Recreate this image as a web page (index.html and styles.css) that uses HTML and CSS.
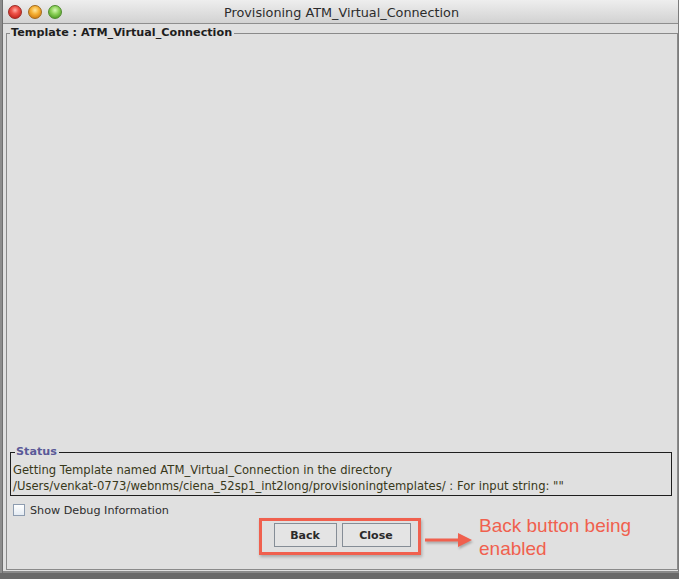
FILE: index.html
```html
<!DOCTYPE html>
<html>
<head>
<meta charset="utf-8">
<link rel="stylesheet" href="styles.css">
</head>
<body>
<div class="screen">
  <div class="backwin"></div>
  <div class="window">
    <div class="titlebar">
      <div class="lights">
        <span class="light red"></span>
        <span class="light yellow"></span>
        <span class="light green"></span>
      </div>
      <div class="title">Provisioning ATM_Virtual_Connection</div>
    </div>
    <div class="body">
      <div class="group template">
        <div class="legend template-legend">Template : ATM_Virtual_Connection</div>
        <div class="spacer"></div>
        <div class="group status">
          <div class="legend status-legend">Status</div>
          <div class="status-text">Getting Template named ATM_Virtual_Connection in the directory<br>/Users/venkat-0773/webnms/ciena_52sp1_int2long/provisioningtemplates/ : For input string: ""</div>
        </div>
        <label class="debug"><span class="checkbox"></span>Show Debug Information</label>
        <div class="buttons">
          <button class="btn back">Back</button>
          <button class="btn close">Close</button>
          <div class="highlight"></div>
          <svg class="arrow" width="52" height="20" viewBox="0 0 52 20">
            <line x1="1" y1="10" x2="36" y2="10" stroke="#f0604e" stroke-width="3"/>
            <polygon points="34,3 48,10 34,17" fill="#f0604e"/>
          </svg>
          <div class="note">Back button being<br>enabled</div>
        </div>
      </div>
    </div>
  </div>
</div>
</body>
</html>
```

FILE: styles.css
```css
html, body {
  margin: 0;
  padding: 0;
  width: 679px;
  height: 579px;
  overflow: hidden;
  background: #6a6a6a;
}
.screen {
  display: flex;
  height: 573px;
}
.backwin {
  width: 3px;
  background: #8d8d8d;
  border-right: 1px solid #6f6f6f;
  box-sizing: border-box;
}
.window {
  width: 676px;
  display: flex;
  flex-direction: column;
  background: #e0e0e0;
  border-right: 1px solid #7c7c7c;
  border-bottom: 2px solid #8a8a8a;
  box-sizing: border-box;
}
.titlebar {
  height: 24px;
  box-sizing: border-box;
  border-bottom: 1px solid #8e8e8e;
  background: linear-gradient(#eeeeee, #d2d2d2);
  position: relative;
  display: flex;
  align-items: center;
  justify-content: center;
}
.lights {
  position: absolute;
  left: 5px;
  top: 5px;
  display: flex;
  gap: 6px;
}
.light {
  width: 14px;
  height: 14px;
  border-radius: 50%;
  box-sizing: border-box;
}
.red {
  background: radial-gradient(circle at 50% 35%, #ffb0a8 0, #f0564c 35%, #c4261e 80%);
  border: 1px solid #9c2a24;
}
.yellow {
  background: radial-gradient(circle at 50% 35%, #ffe7a0 0, #f6b236 40%, #d07a10 85%);
  border: 1px solid #a26a1c;
}
.green {
  background: radial-gradient(circle at 50% 35%, #d8f7b8 0, #8dd25a 40%, #4c9a22 85%);
  border: 1px solid #4f8a2e;
}
.title {
  font-family: "DejaVu Sans", sans-serif;
  font-size: 12.8px;
  color: #2c2c2c;
  margin-left: 2px;
  margin-top: 1px;
}
.body {
  flex: 1;
  display: flex;
  padding: 9px 0 1px 3px;
}
.group {
  position: relative;
  box-sizing: border-box;
}
.legend {
  position: absolute;
  top: -8px;
  background: #e0e0e0;
  font-family: "DejaVu Sans", sans-serif;
  font-weight: bold;
  font-size: 11.2px;
  line-height: 14px;
  padding: 0 2px 0 1px;
}
.template {
  flex: 1;
  border: 1px solid #8a8a8a;
  display: flex;
  flex-direction: column;
}
.template-legend {
  left: 3px;
  color: #1e1e1e;
}
.spacer {
  flex: 1;
}
.status {
  margin: 0 5px 0 3px;
  border: 1px solid #1e1e1e;
  height: 44px;
  padding: 9px 0 0 2px;
}
.status-legend {
  left: 4px;
  color: #5a5a98;
}
.status-text {
  font-family: "DejaVu Sans", sans-serif;
  font-size: 11.6px;
  line-height: 16px;
  color: #38381a;
  white-space: nowrap;
}
.debug {
  display: flex;
  align-items: center;
  margin: 7px 0 0 6px;
  font-family: "DejaVu Sans", sans-serif;
  font-size: 11.2px;
  color: #2e2e2e;
  height: 14px;
}
.checkbox {
  width: 12px;
  height: 12px;
  box-sizing: border-box;
  border: 1px solid #8d9cb0;
  background: linear-gradient(#ffffff, #e4ebf3);
  margin-right: 5px;
}
.buttons {
  position: relative;
  display: flex;
  justify-content: center;
  gap: 5px;
  margin: 6px 0 22px;
}
.btn {
  height: 24px;
  box-sizing: border-box;
  border: 1px solid #858d96;
  background: #e4e4e4;
  font-family: "DejaVu Sans", sans-serif;
  font-weight: bold;
  font-size: 11px;
  color: #2a2a2a;
  padding: 0;
}
.back { width: 63px; }
.close { width: 69px; }
.highlight {
  position: absolute;
  left: 252px;
  top: -5px;
  width: 162px;
  height: 37px;
  box-sizing: border-box;
  border: 3px solid #f0604e;
  box-shadow: 1px 2px 3px rgba(0,0,0,0.25);
}
.arrow {
  position: absolute;
  left: 417px;
  top: 7px;
  filter: drop-shadow(1px 2px 1px rgba(0,0,0,0.25));
}
.note {
  position: absolute;
  left: 472px;
  top: -9px;
  font-family: "Liberation Sans", Arial, sans-serif;
  font-size: 19px;
  line-height: 23px;
  color: #f0604e;
}
```
